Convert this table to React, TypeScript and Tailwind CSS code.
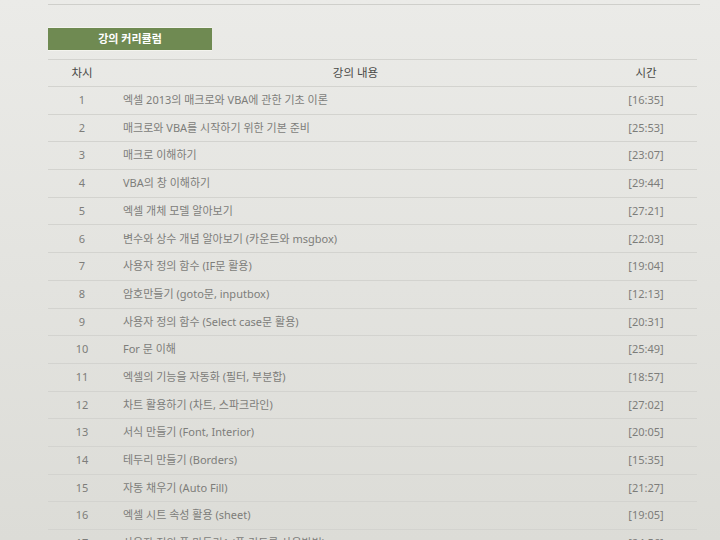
const rows: [number, string, string][] = [
  [1, "엑셀 2013의 매크로와 VBA에 관한 기초 이론", "[16:35]"],
  [2, "매크로와 VBA를 시작하기 위한 기본 준비", "[25:53]"],
  [3, "매크로 이해하기", "[23:07]"],
  [4, "VBA의 창 이해하기", "[29:44]"],
  [5, "엑셀 개체 모델 알아보기", "[27:21]"],
  [6, "변수와 상수 개념 알아보기 (카운트와 msgbox)", "[22:03]"],
  [7, "사용자 정의 함수 (IF문 활용)", "[19:04]"],
  [8, "암호만들기 (goto문, inputbox)", "[12:13]"],
  [9, "사용자 정의 함수 (Select case문 활용)", "[20:31]"],
  [10, "For 문 이해", "[25:49]"],
  [11, "엑셀의 기능을 자동화 (필터, 부분합)", "[18:57]"],
  [12, "차트 활용하기 (차트, 스파크라인)", "[27:02]"],
  [13, "서식 만들기 (Font, Interior)", "[20:05]"],
  [14, "테두리 만들기 (Borders)", "[15:35]"],
  [15, "자동 채우기 (Auto Fill)", "[21:27]"],
  [16, "엑셀 시트 속성 활용 (sheet)", "[19:05]"],
  [17, "사용자 정의 폼 만들기1 (폼 컨트롤 사용방법)", "[24:56]"],
];

export default function App() {
  return (
    <div
      className="w-[720px] h-[540px] overflow-hidden bg-linear-to-b from-[#ebebe8] to-[#dcdcd7] text-[11px] text-[#7d7d7a]"
      style={{ fontFamily: '"Noto Sans", "Noto Sans CJK KR", sans-serif' }}
    >
      <div className="pl-[48px] pr-[20px] pt-[4px]">
        {/* top divider of previous section */}
        <div className="border-t border-[#cfcfcb]" />

        {/* section tab */}
        <div className="mt-[22px] w-[164px] h-[24px] bg-[#6f8a52] border-t border-b border-[#f4f4ef] flex items-center justify-center text-white font-bold text-[11px]">
          강의 커리큘럼
        </div>

        {/* curriculum table */}
        <div className="mt-[8px] w-[649px] border-t border-[#d3d3cf]">
          <div className="flex items-center h-[27px] border-b border-[#d3d3cf] text-[#4a4a48] text-[11.5px]">
            <div className="w-[68px] text-center">차시</div>
            <div className="flex-1 text-center">강의 내용</div>
            <div className="w-[102px] text-center">시간</div>
          </div>
          {rows.map(([no, title, time]) => (
            <div key={no} className="flex items-center h-[27.7px] border-b border-[#d3d3cf]">
              <div className="w-[68px] text-center">{no}</div>
              <div className="flex-1 pl-[7px]">{title}</div>
              <div className="w-[102px] text-center">{time}</div>
            </div>
          ))}
        </div>
      </div>
    </div>
  );
}
